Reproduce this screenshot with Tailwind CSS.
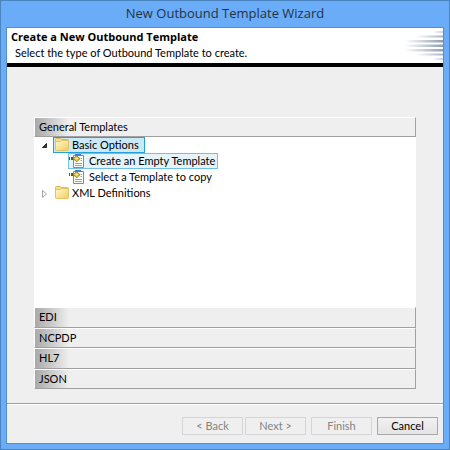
<!DOCTYPE html>
<html lang="en">
<head>
    <meta charset="UTF-8">
    <meta name="viewport" content="width=device-width, initial-scale=1.0">
    <title>New Outbound Template Wizard</title>
    <script src="https://cdn.jsdelivr.net/npm/@tailwindcss/browser@4"></script>
</head>

<body class="bg-[#6aacf7] font-['Lato','Open_Sans',sans-serif] text-[11px] text-black">
    <!-- Shared icons -->
    <svg class="absolute w-0 h-0">
        <defs>
            <linearGradient id="folderFill" x1="0" y1="0" x2="1" y2="1">
                <stop offset="0" stop-color="#fff8c8"/>
                <stop offset="1" stop-color="#f0cf62"/>
            </linearGradient>
            <linearGradient id="streak" x1="0" x2="1">
                <stop offset="0" stop-color="#ffffff"/>
                <stop offset="1" stop-color="#8f9db0"/>
            </linearGradient>
            <symbol id="folder" viewBox="0 0 16 16">
                <path d="M1.500 12.500V2.500q0-1 1-1h4l1 1h6q1 0 1 1v9z" fill="#f5df8c" stroke="#dfba58"/>
                <path d="M9 3.500h4" stroke="#fff"/>
                <path d="M1.500 4.500h5l1-1h7v9q0 1-1 1h-11q-1 0-1-1z" fill="url(#folderFill)" stroke="#e3c267"/>
                <path d="M10 12.500h3" stroke="#b9d9c8"/>
            </symbol>
            <symbol id="template" viewBox="0 0 16 16">
                <path d="M4.500 2.500h10v12h-10z" fill="#fbfbf8" stroke="#8b8a83"/>
                <path d="M11.500 5.500H13M11.500 7.500H13M6 10.500h7M6 12.500h7" stroke="#9ca3aa"/>
                <path d="M6 1h6v2H6z" fill="#3d7fe0"/>
                <path d="M0 4h1v3H0zM2 4h2v3H2z" fill="#5d5633"/>
                <path d="M7.500 2.700L11 5.700 7.500 8.800 4.500 5.700z" fill="#e6c93c" stroke="#77681c" stroke-width=".8"/>
                <path d="M6.500 5.500h2.500" stroke="#fff4a0"/>
            </symbol>
        </defs>
    </svg>

    <div class="min-h-screen flex flex-col border border-[#4a84bf] px-[5px] pb-[5px]">
        <h1 class="h-[26px] flex items-center justify-center font-['Open_Sans',sans-serif] text-[13px] text-[#26333f]">New Outbound Template Wizard</h1>

        <main class="flex-1 flex flex-col bg-[#efefef] border border-[#4f8fd4]">
            <header class="flex justify-between bg-white border-b-4 border-black h-[39px]">
                <div class="pl-1 pt-px">
                    <h2 class="font-['Open_Sans',sans-serif] font-bold leading-[16px]">Create a New Outbound Template</h2>
                    <p class="pl-1 leading-[16px]">Select the type of Outbound Template to create.</p>
                </div>
                <svg class="w-10 h-9" viewBox="0 0 40 36" fill="url(#streak)">
                    <rect x="30" y="3" width="10" height="2" opacity=".5"/>
                    <rect x="13" y="7.500" width="27" height="2" opacity=".8"/>
                    <rect x="2" y="12" width="38" height="2.500"/>
                    <rect x="2" y="16.500" width="38" height="2.500"/>
                    <rect x="2" y="21" width="38" height="2.500"/>
                    <rect x="13" y="25.500" width="27" height="2" opacity=".8"/>
                    <rect x="30" y="30" width="10" height="2" opacity=".5"/>
                </svg>
            </header>

            <section class="flex-1 flex flex-col px-[27px] pt-[50px] pb-[14px]">
                <!-- Open group -->
                <button type="button" class="h-[20px] pl-1 text-left border border-t-white border-l-white border-r-[#a0a0a0] border-b-[#a0a0a0] bg-linear-to-r from-[#a9a9a9] to-[#efefef] to-[34px]">General Templates</button>
                <ul class="flex-1 bg-white leading-[16px]">
                    <li>
                        <div class="flex items-center">
                            <svg class="w-4 h-4 ml-[3px]" viewBox="0 0 16 16"><path d="M9.500 6.500v4h-4z" fill="#404040" stroke="#262626"/></svg>
                            <span class="flex items-center h-4 pr-[5px] bg-[#cbe8f6] border border-[#26a0da]">
                                <svg class="w-4 h-4 mr-[2px]"><use href="#folder"/></svg>Basic Options
                            </span>
                        </div>
                        <ul class="pl-[34px]">
                            <li class="flex">
                                <span class="flex items-center h-4 pr-[2px] bg-[#e5f3fb] border border-[#70c0e7]">
                                    <svg class="w-4 h-4 mr-1"><use href="#template"/></svg>Create an Empty Template
                                </span>
                            </li>
                            <li class="flex items-center pl-px">
                                <svg class="w-4 h-4 mr-1"><use href="#template"/></svg>Select a Template to copy
                            </li>
                        </ul>
                    </li>
                    <li class="flex items-center">
                        <svg class="w-4 h-4 ml-[3px] mr-px" viewBox="0 0 16 16"><path d="M5.500 5.500l4 3.500-4 3.500z" fill="#fff" stroke="#a6a6a6"/></svg>
                        <svg class="w-4 h-4 mr-[2px]"><use href="#folder"/></svg>XML Definitions
                    </li>
                </ul>

                <!-- Collapsed groups -->
                <div class="grid grid-rows-4 h-[82px]">
                    <button type="button" class="pl-1 text-left border border-t-white border-l-white border-r-[#a0a0a0] border-b-[#a0a0a0] bg-linear-to-r from-[#a9a9a9] to-[#efefef] to-[34px]">EDI</button>
                    <button type="button" class="pl-1 text-left border border-t-white border-l-white border-r-[#a0a0a0] border-b-[#a0a0a0] bg-linear-to-r from-[#a9a9a9] to-[#efefef] to-[34px]">NCPDP</button>
                    <button type="button" class="pl-1 text-left border border-t-white border-l-white border-r-[#a0a0a0] border-b-[#a0a0a0] bg-linear-to-r from-[#a9a9a9] to-[#efefef] to-[34px]">HL7</button>
                    <button type="button" class="pl-1 text-left border border-t-white border-l-white border-r-[#a0a0a0] border-b-[#a0a0a0] bg-linear-to-r from-[#a9a9a9] to-[#efefef] to-[34px]">JSON</button>
                </div>
            </section>

            <footer class="flex justify-end border-t border-[#a0a0a0] shadow-[inset_0_1px_0_#fff] pt-[13px] pb-2 pr-[5px]">
                <button type="button" disabled class="w-[61px] h-[18px] mr-[2px] flex items-center justify-center border border-[#d5d5d5] text-[#838383]">&lt; Back</button>
                <button type="button" disabled class="w-[61px] h-[18px] mr-[5px] flex items-center justify-center border border-[#d5d5d5] text-[#838383]">Next &gt;</button>
                <button type="button" disabled class="w-[61px] h-[18px] mr-[5px] flex items-center justify-center border border-[#d5d5d5] text-[#838383]">Finish</button>
                <button type="button" class="w-[61px] h-[18px] flex items-center justify-center border border-[#a9a9a9] bg-linear-to-b from-[#f1f1f1] to-[#e4e4e4]">Cancel</button>
            </footer>
        </main>
    </div>
</body>
</html>
